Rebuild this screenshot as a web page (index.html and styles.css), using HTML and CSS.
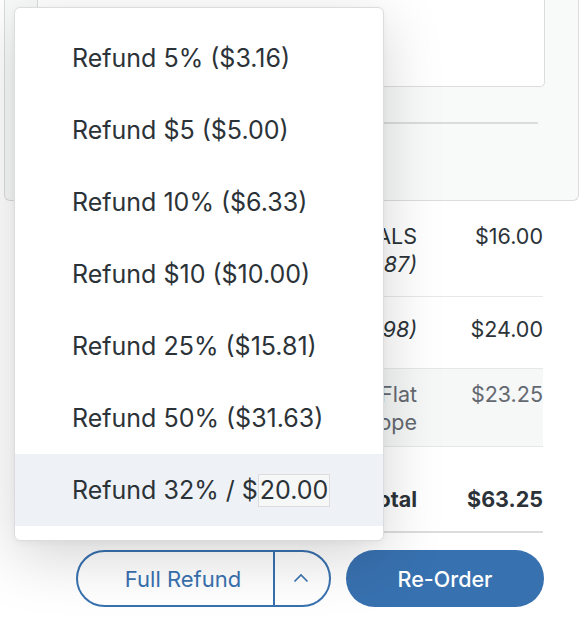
FILE: index.html
```html
<!DOCTYPE html>
<html>
<head>
<meta charset="utf-8">
<link rel="stylesheet" href="styles.css">
</head>
<body>
<div class="page">
  <div class="card">
    <div class="note-box"></div>
    <div class="card-rule"></div>
  </div>

  <div class="summary">
    <div class="row">
      <div class="name">
        <div class="name-main">2 × GOLD MEDALS</div>
        <div class="sku">(#ABC-00287)</div>
      </div>
      <div class="amount">$16.00</div>
    </div>
    <div class="row row-single">
      <div class="name"><span class="sku">(#ABC-00798)</span></div>
      <div class="amount">$24.00</div>
    </div>
    <div class="row row-shipping">
      <div class="name">Shipping: Flat<br>Rate Envelope</div>
      <div class="amount">$23.25</div>
    </div>
    <div class="row row-total">
      <div class="name">Total</div>
      <div class="amount">$63.25</div>
    </div>
  </div>

  <div class="actions">
    <div class="split">
      <button class="split-main">Full Refund</button>
      <button class="split-toggle" aria-label="More">
        <svg width="16" height="10" viewBox="0 0 16 10"><path d="M1.5 8.5 L8 2 L14.5 8.5" fill="none" stroke="#3871b0" stroke-width="1.6"/></svg>
      </button>
    </div>
    <button class="primary">Re-Order</button>
  </div>

  <ul class="menu">
    <li class="menu-item">Refund 5% ($3.16)</li>
    <li class="menu-item">Refund $5 ($5.00)</li>
    <li class="menu-item">Refund 10% ($6.33)</li>
    <li class="menu-item">Refund $10 ($10.00)</li>
    <li class="menu-item">Refund 25% ($15.81)</li>
    <li class="menu-item">Refund 50% ($31.63)</li>
    <li class="menu-item is-active">Refund 32% / $<span class="custom-input">20.00</span></li>
  </ul>
</div>
</body>
</html>
```

FILE: styles.css
```css
* { box-sizing: border-box; }

html, body {
  margin: 0;
  padding: 0;
  background: #ffffff;
}

body {
  font-family: Inter, "Noto Sans", sans-serif;
  color: #2c3338;
  width: 586px;
  height: 624px;
  overflow: hidden;
}

.page {
  position: relative;
  display: flow-root;
  padding: 0 7px 0 4px;
}

.card {
  margin-top: -20px;
  height: 221px;
  border: 1px solid #dcdcde;
  border-top: none;
  border-radius: 0 0 6px 6px;
  background: #f8f9f9;
  padding: 0 33px 0 32px;
}

.note-box {
  height: 107px;
  background: #ffffff;
  border: 1px solid #dcdcde;
  border-top: none;
  border-radius: 0 0 5px 5px;
}

.card-rule {
  margin-top: 35px;
  margin-right: 7px;
  height: 2px;
  background: #dcdcde;
}

.summary {
  margin: 5px 36px 0 33px;
  font-size: 21.5px;
  line-height: 28px;
}

.row {
  display: flex;
  justify-content: space-between;
  border-bottom: 1px solid #e6e7e8;
}

.name {
  width: 380px;
  text-align: right;
}

.amount {
  text-align: right;
}

.row:nth-child(1) { padding: 16px 0 18px; }
.row-single { padding: 18px 0 25px; }
.row-shipping {
  padding: 11px 0 10px;
  background: #f6f7f7;
  color: #646970;
}
.row-total {
  padding: 38px 0 18px;
  font-weight: 700;
  border-bottom: 2px solid #dcdcde;
}

.sku { font-style: italic; }

.actions {
  display: flex;
  justify-content: flex-end;
  gap: 15px;
  margin: 17px 35px 0 0;
}

button {
  font-family: inherit;
  font-size: 22px;
  cursor: pointer;
}

.split {
  display: flex;
  height: 57px;
  border: 2px solid #3871b0;
  border-radius: 29px;
  overflow: hidden;
}

.split-main {
  width: 197px;
  border: none;
  border-right: 2px solid #3871b0;
  background: transparent;
  color: #3871b0;
  padding: 0 0 0 15px;
}

.split-toggle {
  width: 54px;
  border: none;
  background: transparent;
  display: flex;
  align-items: center;
  justify-content: center;
  padding: 0 2px 2px 0;
}

.primary {
  width: 198px;
  height: 57px;
  border: none;
  border-radius: 29px;
  background: #3871b0;
  color: #ffffff;
  font-weight: 500;
  font-size: 21.5px;
}

.menu {
  position: absolute;
  left: 14px;
  top: 7px;
  width: 370px;
  margin: 0;
  padding: 14px 0;
  list-style: none;
  background: #ffffff;
  border: 1px solid #dcdcde;
  border-radius: 6px;
  box-shadow: 0 16px 60px rgba(0, 0, 0, 0.17), 0 2px 6px rgba(0, 0, 0, 0.04);
  font-size: 25px;
}

.menu-item {
  height: 72px;
  display: flex;
  align-items: center;
  padding-left: 57px;
  color: #2c3338;
}

.menu-item.is-active {
  background: #eef2f6;
}

.custom-input {
  display: inline-block;
  border: 1px solid #dcdcde;
  background: #f6f7f7;
  padding: 0 1px;
  line-height: 31px;
}
```
